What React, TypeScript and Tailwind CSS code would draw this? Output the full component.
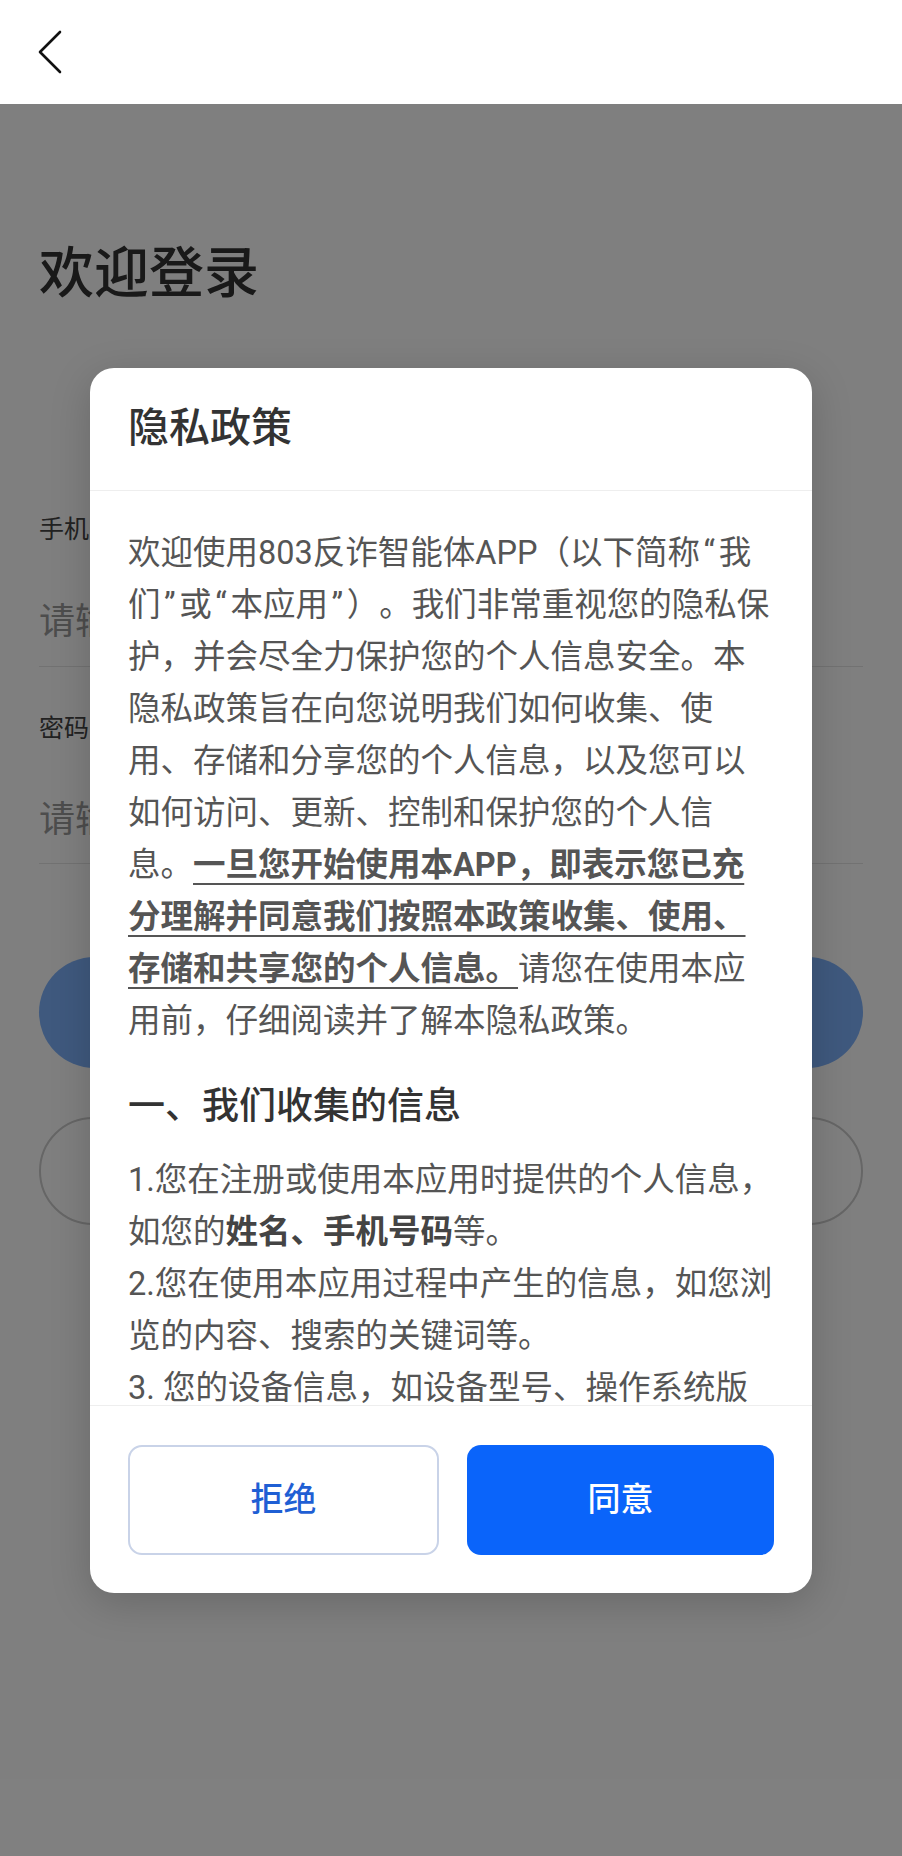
import React from "react";

// ---------------------------------------------------------------------------
// Login page (behind the privacy dialog)
// ---------------------------------------------------------------------------

const FONT = { fontFamily: 'Roboto, "Noto Sans CJK SC", "Noto Sans", sans-serif' };

function BackIcon() {
  return (
    <svg width="26" height="44" viewBox="0 0 26 44" fill="none" aria-hidden>
      <polyline
        points="23,2 3,22 23,42"
        stroke="#111111"
        strokeWidth={2.6}
        strokeLinecap="round"
        strokeLinejoin="round"
      />
    </svg>
  );
}

// quote marks sit in a slightly wider box, as on the device
function Q({ children }: { children: React.ReactNode }) {
  return <span className="px-[0.11em]">{children}</span>;
}

function LoginPage() {
  return (
    <div className="flex flex-col">
      <header className="flex h-[104px] items-center bg-white pl-[37px]">
        <button type="button" aria-label="返回" className="flex">
          <BackIcon />
        </button>
      </header>

      <main className="flex flex-col px-[39px]">
        <h1 className="mt-[142px] text-[55px] font-medium leading-none text-[#333333]">
          欢迎登录
        </h1>

        <label className="mt-[216px] text-[25px] leading-none text-[#444444]">
          手机号
        </label>
        <div className="mt-[62px] border-b border-[#e5e5e5] pb-[26px] text-[36px] leading-none text-[#9a9a9a]">
          请输入手机号
        </div>

        <label className="mt-[49px] text-[25px] leading-none text-[#444444]">
          密码
        </label>
        <div className="mt-[61px] border-b border-[#e5e5e5] pb-[25px] text-[36px] leading-none text-[#9a9a9a]">
          请输入密码
        </div>

        <button
          type="button"
          className="mt-[93px] flex h-[111px] items-center justify-center rounded-full bg-[#7fb3fc] text-[34px] text-white"
        >
          登录
        </button>
        <button
          type="button"
          className="mt-[49px] flex h-[108px] items-center justify-center rounded-full border-2 border-[#cccccc] text-[34px] text-[#333333]"
        >
          注册
        </button>
      </main>
    </div>
  );
}

// ---------------------------------------------------------------------------
// Privacy dialog
// ---------------------------------------------------------------------------

function PrivacyDialog() {
  return (
    <div
      role="dialog"
      aria-labelledby="privacy-title"
      className="flex w-[722px] flex-col overflow-hidden rounded-[24px] bg-white shadow-[0_10px_40px_rgba(0,0,0,0.18)]"
    >
      <div className="flex h-[123px] items-center border-b border-[#eeeeee] px-[38px]">
        <h2 id="privacy-title" className="text-[41px] font-medium leading-none text-[#333333]">
          隐私政策
        </h2>
      </div>

      <div className="h-[914px] overflow-hidden px-[38px] pt-[36px] text-[32.5px] leading-[52px] text-[#555555]">
        <p className="whitespace-nowrap">
          欢迎使用803反诈智能体APP（以下简称<Q>“</Q>我
          <br />
          们<Q>”</Q>或<Q>“</Q>本应用<Q>”</Q>）。我们非常重视您的隐私保
          <br />
          护，并会尽全力保护您的个人信息安全。本
          <br />
          隐私政策旨在向您说明我们如何收集、使
          <br />
          用、存储和分享您的个人信息，以及您可以
          <br />
          如何访问、更新、控制和保护您的个人信
          <br />
          息。
          <span className="font-bold underline decoration-2 underline-offset-[7px]">
            一旦您开始使用本APP，即表示您已充
            <br />
            分理解并同意我们按照本政策收集、使用、
            <br />
            存储和共享您的个人信息。
          </span>
          请您在使用本应
          <br />
          用前，仔细阅读并了解本隐私政策。
        </p>

        <h3 className="mt-[34px] text-[37px] font-medium leading-[52px] text-[#333333]">
          一、我们收集的信息
        </h3>

        <p className="mt-[21px] whitespace-nowrap">
          1.您在注册或使用本应用时提供的个人信息，
          <br />
          如您的<span className="font-bold text-[#444444]">姓名、手机号码</span>等。
          <br />
          2.您在使用本应用过程中产生的信息，如您浏
          <br />
          览的内容、搜索的关键词等。
          <br />
          3. 您的设备信息，如设备型号、操作系统版
          <br />
          本、设备标识符等。
        </p>
      </div>

      <div className="flex gap-[28px] border-t border-[#eeeeee] px-[38px] pb-[38px] pt-[39px]">
        <button
          type="button"
          className="flex h-[110px] flex-1 items-center justify-center rounded-[14px] border-2 border-[#c9d3e8] bg-white text-[33px] font-medium text-[#1f5fd4]"
        >
          拒绝
        </button>
        <button
          type="button"
          className="flex h-[110px] flex-1 items-center justify-center rounded-[14px] bg-[#0a64fa] text-[33px] font-medium text-white"
        >
          同意
        </button>
      </div>
    </div>
  );
}

export default function App() {
  return (
    <div
      className="relative min-h-screen overflow-hidden bg-white [text-spacing-trim:space-all]"
      style={FONT}
    >
      <LoginPage />
      <div className="absolute inset-x-0 bottom-0 top-[104px] flex items-center justify-center bg-black/50">
        <PrivacyDialog />
      </div>
    </div>
  );
}
